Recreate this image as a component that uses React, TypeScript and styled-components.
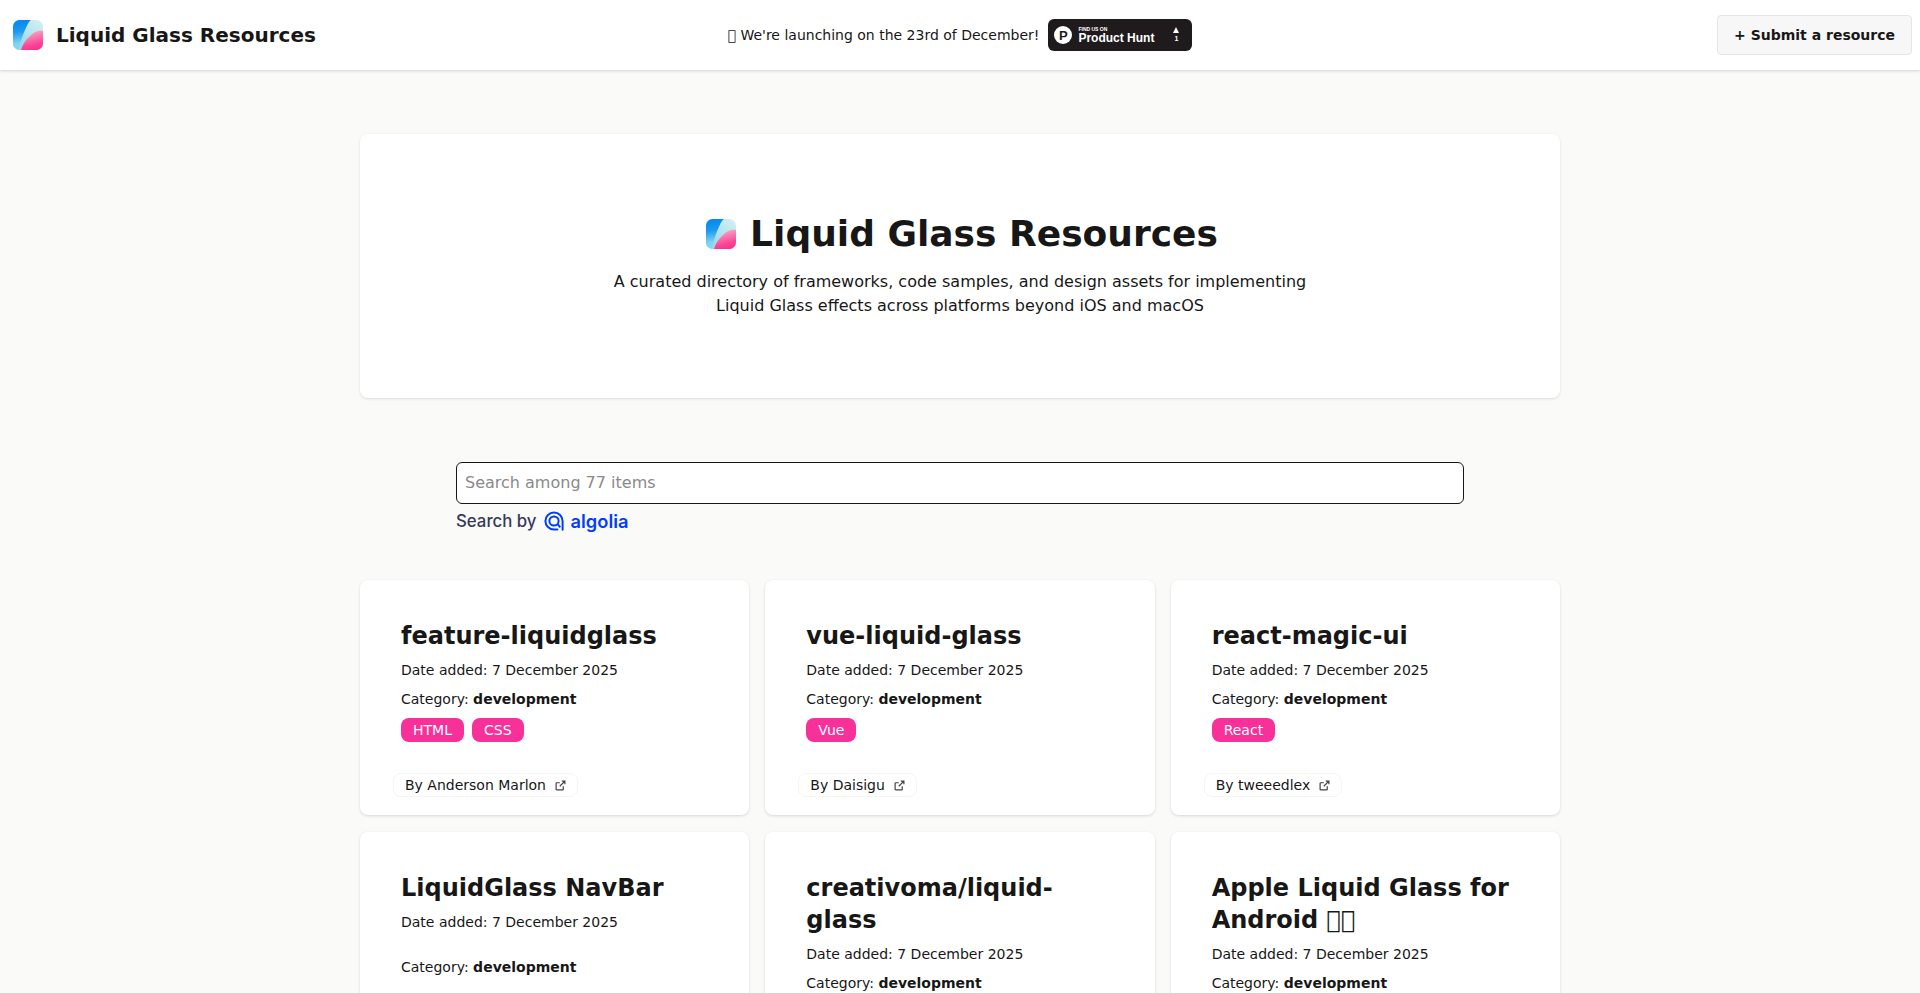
import React from 'react';
import styled, { createGlobalStyle } from 'styled-components';

const GlobalStyle = createGlobalStyle`
  html, body {
    margin: 0;
    padding: 0;
    background: #fafaf9;
    font-family: "DejaVu Sans", sans-serif;
    color: #171717;
  }
  * { box-sizing: border-box; }
`;

type Item = {
  title: string;
  category: string;
  tags: string[];
  author: string;
};

// the reference shows missing-glyph boxes where its emoji were
const MISSING = '\uE000';

const items: Item[] = [
  { title: 'feature-liquidglass', category: 'development', tags: ['HTML', 'CSS'], author: 'Anderson Marlon' },
  { title: 'vue-liquid-glass', category: 'development', tags: ['Vue'], author: 'Daisigu' },
  { title: 'react-magic-ui', category: 'development', tags: ['React'], author: 'tweeedlex' },
  { title: 'LiquidGlass NavBar', category: 'development', tags: [], author: 'Anderson Marlon' },
  { title: 'creativoma/liquid-glass', category: 'development', tags: ['CSS'], author: 'creativoma' },
  { title: `Apple Liquid Glass for Android ${MISSING}${MISSING}`, category: 'development', tags: ['Android'], author: 'Anderson Marlon' },
];

const GlassLogo = ({ size, id }: { size: number; id: string }) => (
  <svg width={size} height={size} viewBox="0 0 30 30" aria-hidden="true">
    <defs>
      <linearGradient id={`${id}-base`} x1="0.9" y1="0" x2="0.2" y2="1">
        <stop offset="0" stopColor="#d4f0f0" />
        <stop offset="1" stopColor="#8fd6ee" />
      </linearGradient>
      <linearGradient id={`${id}-pink`} x1="0.4" y1="0" x2="0.7" y2="1">
        <stop offset="0" stopColor="#f5aec8" />
        <stop offset="0.7" stopColor="#fb4596" />
        <stop offset="1" stopColor="#fc2f8c" />
      </linearGradient>
      <linearGradient id={`${id}-blue`} x1="0.3" y1="0.05" x2="0.4" y2="1">
        <stop offset="0" stopColor="#0789ee" />
        <stop offset="0.35" stopColor="#1c9aee" />
        <stop offset="0.75" stopColor="#7ed2f0" />
        <stop offset="1" stopColor="#8ad8f0" />
      </linearGradient>
      <clipPath id={`${id}-clip`}>
        <rect width="30" height="30" rx="6.5" />
      </clipPath>
    </defs>
    <g clipPath={`url(#${id}-clip)`}>
      <rect width="30" height="30" fill={`url(#${id}-base)`} />
      <path d="M0 0H18C15 2 14 6 12 10C10 14 8 22 5 30H0Z" fill={`url(#${id}-blue)`} />
      <path d="M30 11C24 10 20 13 16 17C12 21 10 24 8 30H30Z" fill={`url(#${id}-pink)`} />
    </g>
  </svg>
);

const ExternalIcon = () => (
  <svg width="11" height="11" viewBox="0 0 12 12" fill="none" stroke="#404040" strokeWidth="1.3" aria-hidden="true">
    <path d="M9 6.8V10a.8.8 0 0 1-.8.8H2a.8.8 0 0 1-.8-.8V3.8A.8.8 0 0 1 2 3h3.2" />
    <path d="M7.4 1.2h3.4v3.4M10.8 1.2 5.2 6.8" />
  </svg>
);

const AlgoliaMark = () => (
  <svg width="20" height="20" viewBox="0 0 20 20" fill="none" stroke="#003dff" strokeWidth="2" aria-hidden="true">
    <path d="M18.6 18.8V10A8.6 8.6 0 1 0 10 18.6h3.4" strokeLinecap="round" />
    <path d="M16.2 16.4 13.7 13.2" />
    <circle cx="10" cy="10" r="4.6" />
  </svg>
);

export default function App() {
  return (
    <>
      <GlobalStyle />
      <Header>
        <Brand>
          <GlassLogo size={30} id="nav" />
          <BrandName>Liquid Glass Resources</BrandName>
        </Brand>
        <Launch>
          <span>{MISSING} We're launching on the 23rd of December!</span>
          <HuntBadge>
            <HuntCircle>P</HuntCircle>
            <HuntText>
              <small>FIND US ON</small>
              <strong>Product Hunt</strong>
            </HuntText>
            <HuntVotes>
              <i />
              <span>1</span>
            </HuntVotes>
          </HuntBadge>
        </Launch>
        <SubmitButton>+ Submit a resource</SubmitButton>
      </Header>

      <Main>
        <Hero>
          <HeroTitle>
            <GlassLogo size={30} id="hero" />
            <span>Liquid Glass Resources</span>
          </HeroTitle>
          <HeroText>
            A curated directory of frameworks, code samples, and design assets for implementing
            <br />
            Liquid Glass effects across platforms beyond iOS and macOS
          </HeroText>
        </Hero>

        <SearchArea>
          <SearchInput placeholder="Search among 77 items" />
          <SearchBy>
            <span>Search by</span>
            <AlgoliaMark />
            <AlgoliaName>algolia</AlgoliaName>
          </SearchBy>
        </SearchArea>

        <CardGrid>
          {items.map(item => (
            <Card key={item.title}>
              <CardHead>
                <CardTitle>{item.title}</CardTitle>
                <Meta>Date added: 7 December 2025</Meta>
              </CardHead>
              <CardBody>
                <Meta>
                  Category: <b>{item.category}</b>
                </Meta>
                <Tags>
                  {item.tags.map(tag => (
                    <Tag key={tag}>{tag}</Tag>
                  ))}
                </Tags>
              </CardBody>
              <Author>
                By {item.author}
                <ExternalIcon />
              </Author>
            </Card>
          ))}
        </CardGrid>
      </Main>
    </>
  );
}

// ===== styled-components =====

const Header = styled.header`
  height: 70px;
  display: grid;
  grid-template-columns: 1fr auto 1fr;
  align-items: center;
  padding: 0 8px;
  background: #fff;
  box-shadow: 0 1px 3px rgba(0, 0, 0, 0.16);
`;

const Brand = styled.div`
  display: flex;
  align-items: center;
  gap: 13px;
  padding-left: 5px;
`;

const BrandName = styled.span`
  font-size: 20px;
  font-weight: 700;
`;

const Launch = styled.div`
  display: flex;
  align-items: center;
  gap: 9px;
  font-size: 14px;
`;

const HuntBadge = styled.a`
  width: 144px;
  height: 32px;
  display: flex;
  align-items: center;
  padding: 0 6px;
  border-radius: 6px;
  background: #1f1a1c;
  color: #fff;
  font-family: "Liberation Sans", sans-serif;
`;

const HuntCircle = styled.span`
  width: 18px;
  height: 18px;
  flex: none;
  display: flex;
  align-items: center;
  justify-content: center;
  border-radius: 50%;
  background: #fff;
  color: #1f1a1c;
  font-size: 13px;
  font-weight: 700;
`;

const HuntText = styled.span`
  display: flex;
  flex-direction: column;
  margin-left: 6px;
  line-height: 1;

  small {
    font-size: 5px;
    font-weight: 700;
  }

  strong {
    font-size: 12px;
  }
`;

const HuntVotes = styled.span`
  display: flex;
  flex-direction: column;
  align-items: center;
  gap: 2px;
  margin-left: auto;
  margin-right: 7px;
  font-size: 7px;
  font-weight: 700;
  line-height: 8px;

  i {
    width: 0;
    height: 0;
    border-left: 3px solid transparent;
    border-right: 3px solid transparent;
    border-bottom: 6px solid #fff;
  }
`;

const SubmitButton = styled.button`
  justify-self: end;
  height: 40px;
  padding: 0 16px;
  border: 1px solid #e5e5e5;
  border-radius: 4px;
  background: #f7f7f7;
  color: #171717;
  font-family: inherit;
  font-size: 14px;
  font-weight: 700;
`;

const Main = styled.main`
  width: 1200px;
  margin: 0 auto;
  padding-top: 64px;
`;

const Hero = styled.section`
  height: 264px;
  display: flex;
  flex-direction: column;
  align-items: center;
  justify-content: center;
  padding-bottom: 3px;
  border-radius: 8px;
  background: #fff;
  box-shadow: 0 1px 3px rgba(0, 0, 0, 0.12);
`;

const HeroTitle = styled.h1`
  display: flex;
  align-items: center;
  gap: 14px;
  margin: 0 0 14px;
  padding-left: 4px;
  font-size: 36px;
  line-height: 44px;
`;

const HeroText = styled.p`
  margin: 0;
  font-size: 16px;
  line-height: 24px;
  text-align: center;
`;

const SearchArea = styled.div`
  width: 1008px;
  margin: 64px auto 47px;
`;

const SearchInput = styled.input`
  display: block;
  width: 100%;
  height: 42px;
  padding: 0 8px 2px;
  border: 1px solid #171717;
  border-radius: 6px;
  background: #fff;
  font-family: inherit;
  font-size: 16px;

  &::placeholder {
    color: #8a8a8a;
  }
`;

const SearchBy = styled.div`
  display: flex;
  align-items: center;
  gap: 7px;
  margin-top: 5px;
  height: 24px;
  color: #36395a;
  font-family: Inter, sans-serif;
  font-size: 16.8px;
  font-weight: 500;
`;

const AlgoliaName = styled.span`
  color: #003dff;
  font-size: 18.3px;
  font-weight: 600;
`;

const CardGrid = styled.div`
  display: grid;
  grid-template-columns: repeat(3, 1fr);
  gap: 17px 16px;
  padding-bottom: 40px;
`;

const Card = styled.article`
  display: flex;
  flex-direction: column;
  justify-content: space-between;
  padding: 40px 41px 18px;
  border-radius: 8px;
  background: #fff;
  box-shadow: 0 1px 3px rgba(0, 0, 0, 0.14);
`;

const CardHead = styled.div`
  margin-bottom: 10px;
`;

const CardBody = styled.div`
  margin-bottom: 31px;
`;

const CardTitle = styled.h2`
  margin: 0 0 9px;
  font-size: 24px;
  line-height: 32px;
`;

const Meta = styled.div`
  font-size: 14px;
  line-height: 19px;
`;

const Tags = styled.div`
  display: flex;
  gap: 8px;
  min-height: 24px;
  margin-top: 9px;
`;

const Tag = styled.span`
  height: 24px;
  padding: 0 12px;
  display: flex;
  align-items: center;
  border-radius: 8px;
  background: #f8309a;
  color: #fff;
  font-size: 14px;
`;

const Author = styled.a`
  align-self: flex-start;
  display: flex;
  align-items: center;
  gap: 9px;
  height: 24px;
  margin-left: -8px;
  padding: 0 11px;
  border: 1px solid #f5f5f5;
  border-radius: 8px;
  font-size: 14px;
`;
